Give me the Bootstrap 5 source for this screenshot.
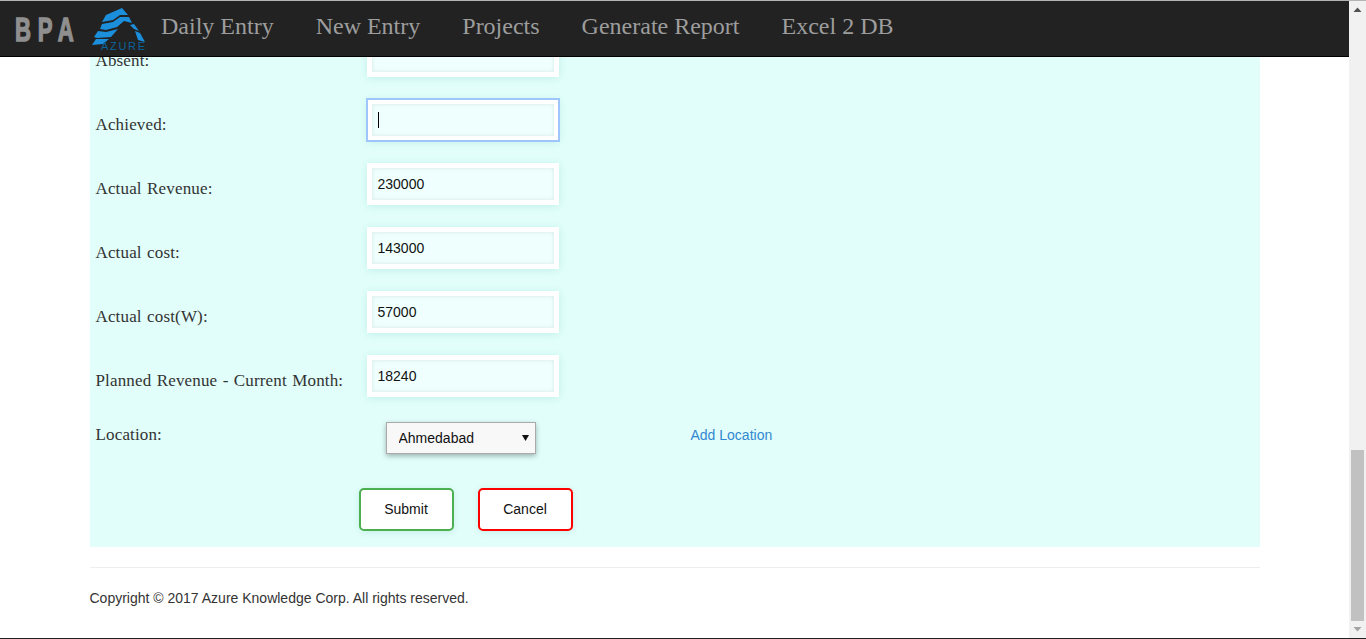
<!DOCTYPE html>
<html lang="en">
<head>
    <meta charset="UTF-8">
    <meta name="viewport" content="width=device-width, initial-scale=1.0">
    <title>BPA</title>
    <link href="https://cdn.jsdelivr.net/npm/bootstrap@5.3.1/dist/css/bootstrap.min.css" rel="stylesheet">
    <style>
        html, body { height: 639px; overflow: hidden; }
        body {
            background: #fff;
            border-top: 1px solid #b4b4b4;
            border-bottom: 1px solid #222;
            font-family: "Liberation Sans", Arial, sans-serif;
            font-size: 14px;
            color: #333;
        }
        .page-col { width: 1349px; height: 637px; overflow: hidden; }
        .top-bar {
            height: 56px;
            padding: 0;
            background: #222;
            border-bottom: 1px solid #000;
            flex-wrap: nowrap;
            justify-content: flex-start;
        }
        .bpa-brand {
            width: 78px;
            margin: 0 0 0 15px;
            padding: 0;
            color: #8f8f8f;
            font-family: "Liberation Sans", sans-serif;
            font-weight: 700;
            font-size: 34px;
            letter-spacing: 10.5px;
            line-height: 50px;
            -webkit-text-stroke: 1.5px #8f8f8f;
            transform: scaleX(.65);
            transform-origin: left center;
        }
        .azure-logo { display: block; margin-top: 2px; margin-left: -1px; flex: none; }
        .azure-logo text { font-family: "Liberation Sans", sans-serif; font-size: 11px; fill: #0c6399; }
        .top-links { margin-left: 13px; margin-bottom: 6px; gap: 42px; }
        .top-links .nav-link {
            padding: 0;
            color: #9d9d9d;
            font-family: "Liberation Serif", "Times New Roman", serif;
            font-size: 24px;
            line-height: 46px;
        }
        .page-wrap { width: 1170px; margin: 0 auto; }
        .form-panel {
            background: #e1fefa;
            height: 490px;
            overflow: hidden;
            padding-left: 6px;
            font-family: "Liberation Serif", "Times New Roman", serif;
            font-size: 17px;
            word-spacing: 1px;
            letter-spacing: .15px;
        }
        .form-line { height: 42px; margin-bottom: 22px; }
        .form-line.first-cut { margin-top: -22px; }
        .form-line label { width: 271px; padding-top: 13px; flex: none; }
        .fld.form-control {
            width: 192px;
            height: 42px;
            padding: 0 6px;
            border: 5px solid #fff;
            border-radius: 0;
            background-color: #effffe;
            color: #111;
            font-family: "Liberation Sans", Arial, sans-serif;
            font-size: 14px;
            letter-spacing: 0;
            box-shadow: inset 0 0 4px rgba(0, 70, 60, .12), 0 1px 8px rgba(0, 150, 130, .14);
        }
        .fld.fld-on {
            outline: 2px solid #9fc5ff;
            outline-offset: -1px;
            background-image: linear-gradient(#000, #000);
            background-repeat: no-repeat;
            background-size: 1px 16px;
            background-position: 6px center;
        }
        .loc-line { height: 32px; margin-top: 25px; }
        .loc-line label { width: 290px; flex: none; margin-top: -7px; }
        .loc-pick.form-select {
            width: 150px;
            height: 32px;
            padding: 0 0 0 12px;
            border: 1px solid #aaa;
            border-radius: 0;
            background-color: #f8f8f8;
            background-image: url("data:image/svg+xml,%3Csvg xmlns='http://www.w3.org/2000/svg' width='7' height='6'%3E%3Cpath d='M0 0h7L3.5 6z' fill='%23111'/%3E%3C/svg%3E");
            background-size: 7px 6px;
            background-position: right 6px center;
            color: #111;
            font-family: "Liberation Sans", Arial, sans-serif;
            font-size: 14px;
            word-spacing: 0;
            letter-spacing: 0;
            box-shadow: 0 2px 5px rgba(0, 0, 0, .3);
        }
        .add-loc {
            margin-left: 155px;
            margin-top: -5px;
            color: #3288d0;
            font-family: "Liberation Sans", Arial, sans-serif;
            font-size: 14px;
            word-spacing: 0;
            letter-spacing: 0;
            text-decoration: none;
        }
        .btn-line { margin-top: 34px; margin-left: 263px; gap: 24px; }
        .act-btn.btn {
            width: 95px;
            height: 43px;
            padding: 0;
            background: #fff;
            border-width: 2px;
            border-radius: 5px;
            color: #111;
            font-family: "Liberation Sans", Arial, sans-serif;
            font-size: 14px;
            letter-spacing: 0;
            box-shadow: 0 1px 6px rgba(0, 120, 100, .12);
        }
        .act-ok.btn { border-color: #4caf50; }
        .act-no.btn { border-color: #f00; }
        .foot-line { margin: 20px 0; border-top: 1px solid #eee; opacity: 1; }
        .foot-text { margin: 0; font-size: 14px; color: #333; }
        .fake-bar { width: 17px; height: 637px; background: #f1f1f1; }
        .bar-arrow { height: 17px; }
        .bar-thumb { width: 13px; height: 171px; background: #c1c1c1; margin: 432px auto 0; }
    </style>
</head>
<body>
    <div class="d-flex">
        <div class="page-col">
            <nav class="navbar top-bar">
                <a class="navbar-brand bpa-brand" href="#">BPA</a>
                <svg class="azure-logo" width="56" height="46" viewBox="92 7 56 46">
                    <g fill="#1b8fdc">
                        <path d="M106 15 122 8 128 15 120 15 113 20 102 22z"/>
                        <path d="M102 24 113 22 120 17 129 17 132 23 124 21 117 27 106 30 100 29z"/>
                        <path d="M98 31 106 32 118 29 111 37 97 38 94 37z"/>
                        <path d="M96 39 109 39 103 44 92 45z"/>
                        <path d="M130 25 134 24 139 31 134 29z"/>
                        <path d="M135 31 140 33 145 42 138 40z"/>
                    </g>
                    <text x="101" y="50" textLength="44">AZURE</text>
                </svg>
                <ul class="navbar-nav flex-row top-links">
                    <li class="nav-item"><a class="nav-link" href="#">Daily Entry</a></li>
                    <li class="nav-item"><a class="nav-link" href="#">New Entry</a></li>
                    <li class="nav-item"><a class="nav-link" href="#">Projects</a></li>
                    <li class="nav-item"><a class="nav-link" href="#">Generate Report</a></li>
                    <li class="nav-item"><a class="nav-link" href="#">Excel 2 DB</a></li>
                </ul>
            </nav>
            <div class="page-wrap">
                <form class="form-panel">
                    <div class="d-flex form-line first-cut">
                        <label>Absent:</label>
                        <input class="form-control fld" type="text">
                    </div>
                    <div class="d-flex form-line">
                        <label>Achieved:</label>
                        <input class="form-control fld fld-on" type="text">
                    </div>
                    <div class="d-flex form-line">
                        <label>Actual Revenue:</label>
                        <input class="form-control fld" type="text" value="230000">
                    </div>
                    <div class="d-flex form-line">
                        <label>Actual cost:</label>
                        <input class="form-control fld" type="text" value="143000">
                    </div>
                    <div class="d-flex form-line">
                        <label>Actual cost(W):</label>
                        <input class="form-control fld" type="text" value="57000">
                    </div>
                    <div class="d-flex form-line">
                        <label>Planned Revenue - Current Month:</label>
                        <input class="form-control fld" type="text" value="18240">
                    </div>
                    <div class="d-flex align-items-center loc-line">
                        <label>Location:</label>
                        <select class="form-select loc-pick"><option>Ahmedabad</option></select>
                        <a class="add-loc" href="#">Add Location</a>
                    </div>
                    <div class="d-flex btn-line">
                        <button class="btn act-btn act-ok" type="button">Submit</button>
                        <button class="btn act-btn act-no" type="button">Cancel</button>
                    </div>
                </form>
                <hr class="foot-line">
                <p class="foot-text">Copyright © 2017 Azure Knowledge Corp. All rights reserved.</p>
            </div>
        </div>
        <div class="fake-bar">
            <svg class="bar-arrow d-block" width="17" height="17"><path d="M4.5 11 8.5 6.5 12.5 11z" fill="#505050"/></svg>
            <div class="bar-thumb"></div>
            <svg class="bar-arrow d-block" width="17" height="17"><path d="M4.5 6 8.5 10.5 12.5 6z" fill="#a3a3a3"/></svg>
        </div>
    </div>
</body>
</html>
